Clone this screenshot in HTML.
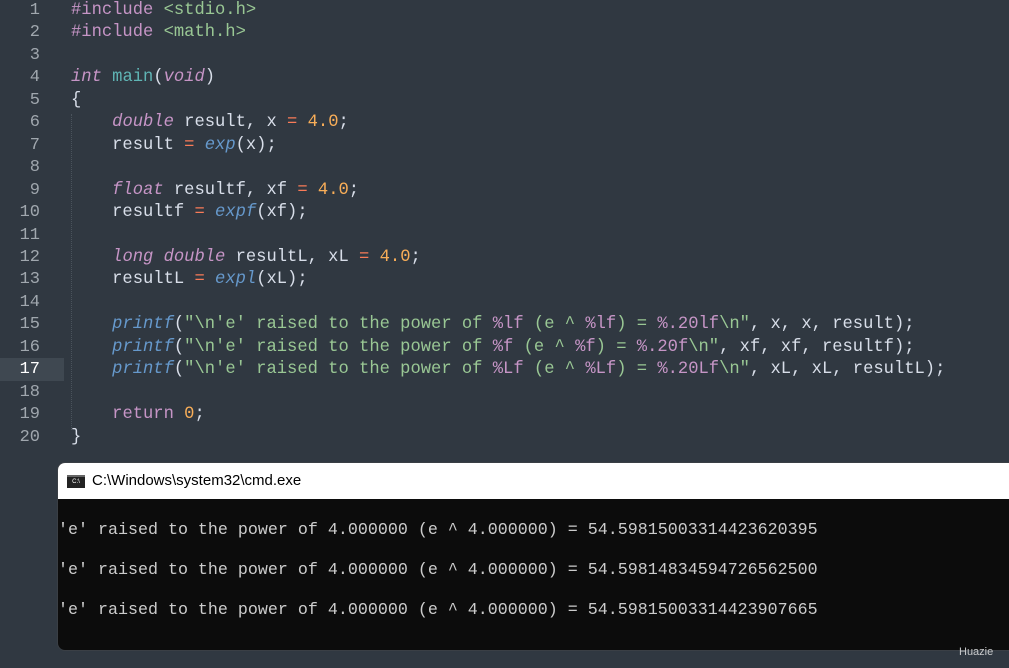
<!DOCTYPE html>
<html><head><meta charset="utf-8"><style>
body{margin:0;width:1009px;height:668px;background:#303841;overflow:hidden;position:relative;font-family:"Liberation Mono",monospace}
.ln{position:absolute;left:0;width:40px;text-align:right;color:#a0a7ae;font-size:17px;line-height:22.45px;top:0px}
.code{position:absolute;left:71px;top:0px;font-size:17.15px;line-height:22.45px;color:#d8dee9;white-space:pre}
.hl{position:absolute;left:0;top:358px;width:64px;height:23px;background:#3f4851}
.guide{position:absolute;left:71px;top:114px;height:316px;border-left:1px dotted #4a535c}
.k{color:#c695c6}.i{color:#c695c6;font-style:italic}.s{color:#99c794}.f{color:#5fb4b4}.b{color:#6699cc;font-style:italic}.o{color:#f9ae58}.op{color:#f97b58}.p{color:#c695c6}
.win{position:absolute;left:57px;top:462px;width:960px;height:189px;background:#0c0c0c;border-radius:8px 0 0 8px;border:1px solid #3a3f45;box-sizing:border-box;overflow:hidden}
.tb{height:36px;background:#fff;font-family:"Liberation Sans",sans-serif;font-size:15px;color:#000;line-height:36px;padding-left:34px;position:relative}
.ico{position:absolute;left:9px;top:12px;width:18px;height:13px;background:#222;border-top:2px solid #666;box-sizing:border-box;color:#fff;font-size:6px;line-height:10px;text-align:center}
.out{color:#cccccc;font-size:16.67px;line-height:40px;padding-top:12px;white-space:pre;font-family:"Liberation Mono",monospace}
.wm{position:absolute;left:959px;top:646px;color:#c9cbcd;font-family:"Liberation Sans",sans-serif;font-size:11px}
</style></head><body>
<div class="hl"></div>
<div class="guide"></div>
<div class="ln">1<br>2<br>3<br>4<br>5<br>6<br>7<br>8<br>9<br>10<br>11<br>12<br>13<br>14<br>15<br>16<br><span style="color:#fff">17</span><br>18<br>19<br>20</div>
<div class="code"><span class="k">#include</span> <span class="s">&lt;stdio.h&gt;</span>
<span class="k">#include</span> <span class="s">&lt;math.h&gt;</span>

<span class="i">int</span> <span class="f">main</span>(<span class="i">void</span>)
{
    <span class="i">double</span> result, x <span class="op">=</span> <span class="o">4.0</span>;
    result <span class="op">=</span> <span class="b">exp</span>(x);

    <span class="i">float</span> resultf, xf <span class="op">=</span> <span class="o">4.0</span>;
    resultf <span class="op">=</span> <span class="b">expf</span>(xf);

    <span class="i">long double</span> resultL, xL <span class="op">=</span> <span class="o">4.0</span>;
    resultL <span class="op">=</span> <span class="b">expl</span>(xL);

    <span class="b">printf</span>(<span class="s">"\n'e' raised to the power of </span><span class="p">%lf</span><span class="s"> (e ^ </span><span class="p">%lf</span><span class="s">) = </span><span class="p">%.20lf</span><span class="s">\n"</span>, x, x, result);
    <span class="b">printf</span>(<span class="s">"\n'e' raised to the power of </span><span class="p">%f</span><span class="s"> (e ^ </span><span class="p">%f</span><span class="s">) = </span><span class="p">%.20f</span><span class="s">\n"</span>, xf, xf, resultf);
    <span class="b">printf</span>(<span class="s">"\n'e' raised to the power of </span><span class="p">%Lf</span><span class="s"> (e ^ </span><span class="p">%Lf</span><span class="s">) = </span><span class="p">%.20Lf</span><span class="s">\n"</span>, xL, xL, resultL);

    <span class="k">return</span> <span class="o">0</span>;
}</div>
<div class="win">
<div class="tb"><div class="ico">C:\</div>C:\Windows\system32\cmd.exe</div>
<div class="out">'e' raised to the power of 4.000000 (e ^ 4.000000) = 54.59815003314423620395
'e' raised to the power of 4.000000 (e ^ 4.000000) = 54.59814834594726562500
'e' raised to the power of 4.000000 (e ^ 4.000000) = 54.59815003314423907665</div>
</div>
<div class="wm">Huazie</div>
</body></html>
